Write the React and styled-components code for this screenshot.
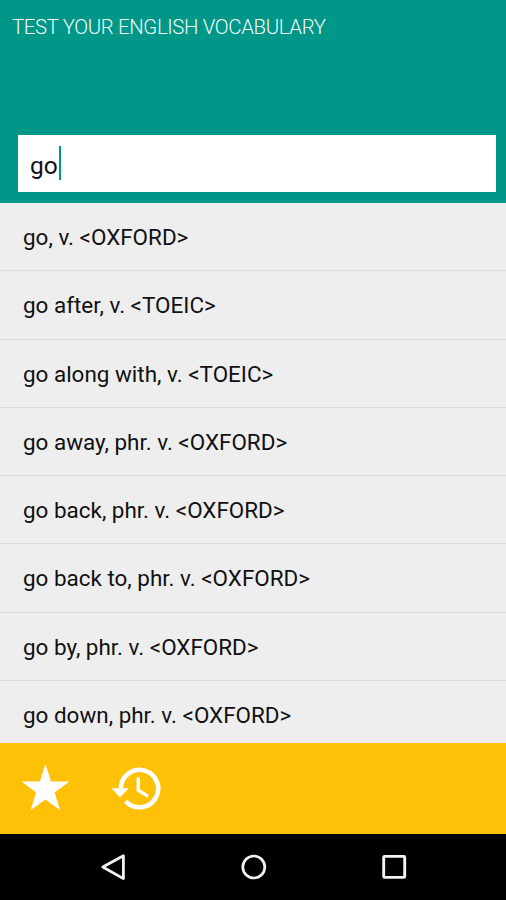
import React, { useState } from 'react';
import styled, { createGlobalStyle } from 'styled-components';

const GlobalStyle = createGlobalStyle`
  * {
    box-sizing: border-box;
  }

  body {
    margin: 0;
    font-family: Roboto, sans-serif;
  }
`;

const Screen = styled.div`
  display: flex;
  flex-direction: column;
  width: 506px;
  height: 900px;
  overflow: hidden;
  background: #eeeeee;
`;

const Header = styled.header`
  display: flex;
  flex-direction: column;
  justify-content: space-between;
  flex: none;
  height: 203px;
  padding: 14px 10px 11px 12px;
  background: #009688;
`;

const Title = styled.h1`
  margin: 0;
  font-size: 20.4px;
  line-height: 26px;
  font-weight: 300;
  letter-spacing: -0.37px;
  color: #f2fbfa;
  white-space: nowrap;
`;

const SearchBox = styled.div`
  display: flex;
  align-items: center;
  height: 57px;
  margin-left: 6px;
  padding: 3px 12px 0;
  background: #fff;
  font-size: 24.5px;
  color: #111;
`;

const Cursor = styled.span`
  width: 2px;
  height: 34px;
  margin-top: -4px;
  margin-left: 1px;
  background: #009688;
`;

const List = styled.ul`
  flex: 1;
  min-height: 0;
  margin: 0;
  padding: 0;
  overflow: hidden;
  list-style: none;
`;

const Row = styled.li`
  display: flex;
  align-items: center;
  height: 68.25px;
  padding: 1px 23px 0;
  border-bottom: 1px solid #dbdbdb;
  font-size: 22.45px;
  color: #111;
  white-space: nowrap;
`;

const ActionBar = styled.div`
  display: flex;
  align-items: center;
  flex: none;
  height: 91px;
  padding: 0 0 2px 21px;
  gap: 41px;
  background: #ffc107;
`;

const IconButton = styled.button`
  display: flex;
  padding: 0;
  border: 0;
  background: none;
  color: #fff;
`;

const NavBar = styled.nav`
  display: flex;
  align-items: center;
  justify-content: space-between;
  flex: none;
  height: 66px;
  padding: 0 97px 0 98px;
  background: #000;
`;

const words = [
  'go, v. <OXFORD>',
  'go after, v. <TOEIC>',
  'go along with, v. <TOEIC>',
  'go away, phr. v. <OXFORD>',
  'go back, phr. v. <OXFORD>',
  'go back to, phr. v. <OXFORD>',
  'go by, phr. v. <OXFORD>',
  'go down, phr. v. <OXFORD>',
];

const StarIcon = () => (
  <svg width="49" height="47" viewBox="0 0 49 47" fill="currentColor">
    <path d="M24.4 0L30 17.6h18.5L33.6 28.6 39.3 46.2 24.4 35.4 9.5 46.2l5.7-17.6L.4 17.6h18.4z" />
  </svg>
);

const HistoryIcon = () => (
  <svg width="50" height="44" viewBox="0 0 50 44" fill="none" stroke="currentColor">
    <path d="M9.8 22.5A18.7 18.7 0 1 1 14.7 35.2" strokeWidth="4.6" />
    <path d="M.5 22.2h17.2L9 31.4z" fill="currentColor" stroke="none" />
    <path d="M27.2 12.8v11.4l8.8 5.4" strokeWidth="3.4" strokeLinecap="round" strokeLinejoin="round" />
  </svg>
);

const BackIcon = () => (
  <svg width="30" height="30" viewBox="0 0 30 30" fill="none" stroke="#f2f2f2" strokeWidth="2.8">
    <path d="M25.4 3.8v22.8L4.8 15z" strokeLinejoin="round" />
  </svg>
);

const HomeIcon = () => (
  <svg width="30" height="30" viewBox="0 0 30 30" fill="none" stroke="#f2f2f2" strokeWidth="2.7">
    <circle cx="14.8" cy="15" r="11" />
  </svg>
);

const RecentIcon = () => (
  <svg width="30" height="30" viewBox="0 0 30 30" fill="none" stroke="#f2f2f2" strokeWidth="2.9">
    <rect x="4.7" y="4.4" width="21" height="21" rx="0.8" />
  </svg>
);

const App = () => {
  const [query] = useState('go');

  return (
    <>
      <GlobalStyle />
      <Screen>
        <Header>
          <Title>TEST YOUR ENGLISH VOCABULARY</Title>
          <SearchBox>
            <span>{query}</span>
            <Cursor />
          </SearchBox>
        </Header>
        <List>
          {words.map((word) => (
            <Row key={word}>{word}</Row>
          ))}
        </List>
        <ActionBar>
          <IconButton aria-label="Favorites"><StarIcon /></IconButton>
          <IconButton aria-label="History"><HistoryIcon /></IconButton>
        </ActionBar>
        <NavBar>
          <IconButton aria-label="Back"><BackIcon /></IconButton>
          <IconButton aria-label="Home"><HomeIcon /></IconButton>
          <IconButton aria-label="Recent apps"><RecentIcon /></IconButton>
        </NavBar>
      </Screen>
    </>
  );
};

export default App;
